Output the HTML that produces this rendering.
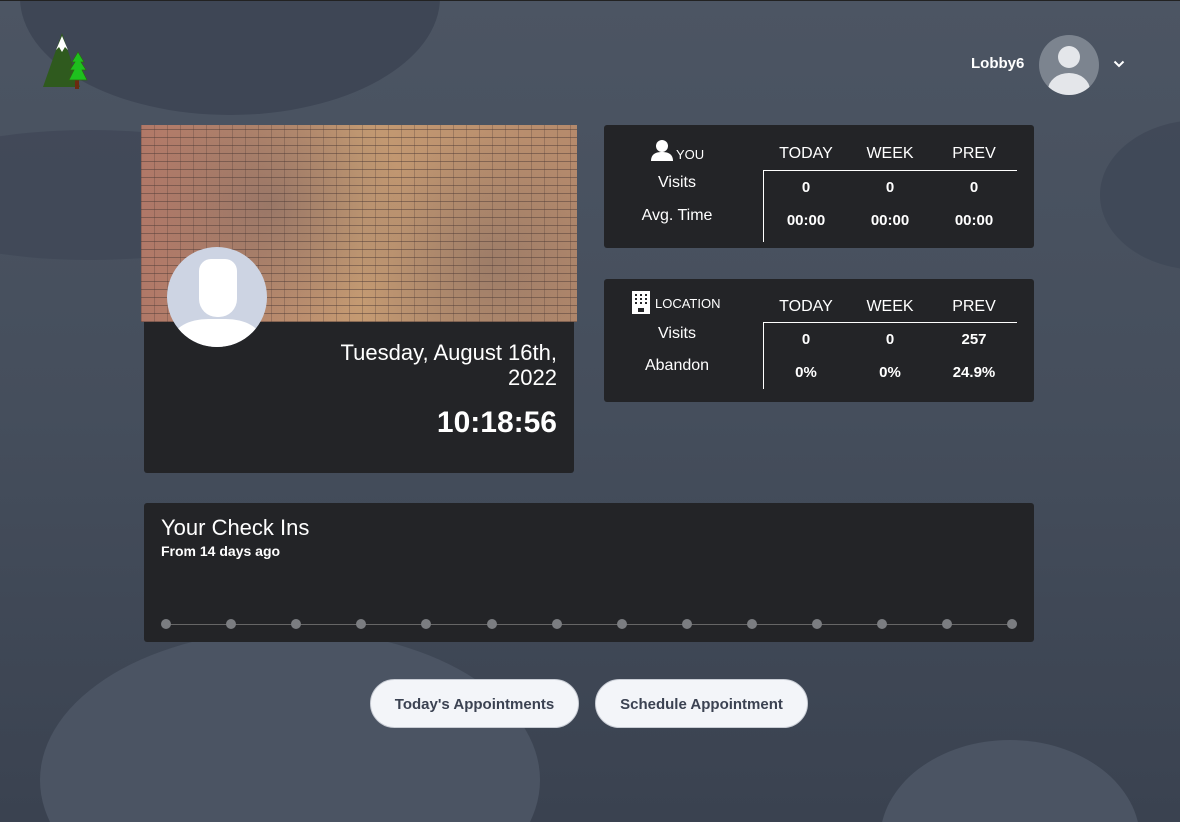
<!DOCTYPE html>
<html style="width:1180px;height:822px;overflow:hidden;background:#3a4250"><head><meta charset="utf-8"><style>
*{box-sizing:border-box;margin:0;padding:0}
body{width:1180px;height:822px;overflow:hidden;font-family:"Liberation Sans",sans-serif;color:#fff;position:relative;background:linear-gradient(180deg,#4c5563 0%,#454e5c 50%,#3a4250 100%);}
.bg{position:absolute;left:0;top:0;width:1180px;height:822px;overflow:hidden}
.blob{position:absolute;border-radius:50%;}
.card{position:absolute;background:#232427;border-radius:3px;}
.stat{width:430px;}
.stat .lbl{position:absolute;width:146px;text-align:center;font-size:16px;}
.stat .col{position:absolute;width:84px;text-align:center;font-size:16px;}
.stat .b{font-weight:bold;font-size:15px;}
.btn{position:absolute;top:679px;height:49px;background:#f3f5f9;border-radius:25px;color:#3b4252;font-size:15px;font-weight:bold;text-align:center;line-height:49px;border:1px solid #c8ccd4}
</style></head><body>
<div class="bg">
<div class="blob" style="left:20px;top:-120px;width:420px;height:235px;background:#3e4655"></div>
<div class="blob" style="left:-120px;top:130px;width:420px;height:130px;background:#3e4655;opacity:.7"></div>
<div class="blob" style="left:1100px;top:120px;width:200px;height:150px;background:#3f4756;opacity:.8"></div>
<div class="blob" style="left:40px;top:630px;width:500px;height:300px;background:#4b5463"></div>
<div class="blob" style="left:880px;top:740px;width:260px;height:200px;background:#4b5463"></div>
<div style="position:absolute;left:0;top:0;width:1180px;height:1px;background:#222"></div>
</div>

<svg style="position:absolute;left:40px;top:30px" width="52" height="62" viewBox="0 0 52 62">
<polygon points="3,57 22,3 40,57" fill="#2f5a1e"/>
<polygon points="16,20 22,6 28,20 25,17 22,22 19,17" fill="#fff"/>
<rect x="35" y="48" width="4" height="11" fill="#6b2a10"/>
<polygon points="38,22 44,32 41,32 46,40 42,40 47,50 29,50 34,40 30,40 35,32 32,32" fill="#1ec01e" stroke="#2a6a10" stroke-width=".7"/>
</svg>

<div style="position:absolute;left:971px;top:55px;font-size:15px;font-weight:bold">Lobby6</div>
<div style="position:absolute;left:1039px;top:35px;width:60px;height:60px;border-radius:50%;background:#7c848f;overflow:hidden">
<div style="position:absolute;left:19px;top:11px;width:22px;height:22px;border-radius:50%;background:#e4e6ea"></div>
<div style="position:absolute;left:9px;top:38px;width:42px;height:34px;border-radius:50%;background:#e4e6ea"></div></div>
<svg style="position:absolute;left:1113px;top:60px" width="12" height="8"><path d="M1.5 1.5l4.5 4.5 4.5-4.5" stroke="#fff" stroke-width="2" fill="none"/></svg>

<div class="card" style="left:144px;top:125px;width:430px;height:348px"></div>
<div style="position:absolute;left:141px;top:125px;width:436px;height:197px;background-color:#b9876a;background-image:
repeating-linear-gradient(0deg,rgba(80,60,55,.5) 0 1px,transparent 1px 8px),
repeating-linear-gradient(90deg,rgba(80,60,55,.3) 0 1px,transparent 1px 13px),
radial-gradient(circle at 30% 40%,rgba(90,80,90,.35),transparent 40%),
radial-gradient(circle at 80% 70%,rgba(90,80,90,.3),transparent 35%),
linear-gradient(90deg,#b07868,#c49a72,#b58a6c)"></div>
<div style="position:absolute;left:167px;top:247px;width:100px;height:100px;border-radius:50%;background:#cdd4e3;overflow:hidden">
<div style="position:absolute;left:32px;top:12px;width:38px;height:58px;border-radius:12px 12px 18px 18px;background:#fff"></div>
<div style="position:absolute;left:6px;top:72px;width:88px;height:50px;border-radius:40% 40% 0 0;background:#fff"></div></div>
<div style="position:absolute;right:623px;top:340px;text-align:right;font-size:22px;line-height:25px;font-weight:300">Tuesday, August 16th,<br>2022</div>
<div style="position:absolute;right:623px;top:406px;font-size:30px;font-weight:bold">10:18:56</div>

<div class="card stat" style="left:604px;top:125px;height:123px">
<svg style="position:absolute;left:46px;top:14px" width="24" height="22" viewBox="0 0 24 22"><circle cx="12" cy="7" r="6" fill="#fff"/><path d="M1 22c0-7 5-9 11-9s11 2 11 9z" fill="#fff"/></svg>
<div style="position:absolute;left:72px;top:22px;font-size:13px">YOU</div>
<div class="lbl" style="top:49px">Visits</div><div class="lbl" style="top:82px">Avg. Time</div>
<div class="col" style="left:160px;top:20px">TODAY</div><div class="col" style="left:244px;top:20px">WEEK</div><div class="col" style="left:328px;top:20px">PREV</div>
<div style="position:absolute;left:159px;top:45px;width:254px;height:1px;background:#fff"></div>
<div style="position:absolute;left:159px;top:45px;width:1px;height:72px;background:#fff"></div>
<div class="col b" style="left:160px;top:54px">0</div><div class="col b" style="left:244px;top:54px">0</div><div class="col b" style="left:328px;top:54px">0</div>
<div class="col b" style="left:160px;top:87px">00:00</div><div class="col b" style="left:244px;top:87px">00:00</div><div class="col b" style="left:328px;top:87px">00:00</div>
</div>

<div class="card stat" style="left:604px;top:279px;height:123px">
<svg style="position:absolute;left:28px;top:12px" width="18" height="23" viewBox="0 0 18 23"><rect width="18" height="23" fill="#fff"/><g fill="#232427"><rect x="3" y="3" width="2" height="2"/><rect x="8" y="3" width="2" height="2"/><rect x="13" y="3" width="2" height="2"/><rect x="3" y="7" width="2" height="2"/><rect x="8" y="7" width="2" height="2"/><rect x="13" y="7" width="2" height="2"/><rect x="3" y="11" width="2" height="2"/><rect x="8" y="11" width="2" height="2"/><rect x="13" y="11" width="2" height="2"/><rect x="6" y="17" width="6" height="4"/></g></svg>
<div style="position:absolute;left:51px;top:17px;font-size:13px">LOCATION</div>
<div class="lbl" style="top:46px">Visits</div><div class="lbl" style="top:78px">Abandon</div>
<div class="col" style="left:160px;top:19px">TODAY</div><div class="col" style="left:244px;top:19px">WEEK</div><div class="col" style="left:328px;top:19px">PREV</div>
<div style="position:absolute;left:159px;top:43px;width:254px;height:1px;background:#fff"></div>
<div style="position:absolute;left:159px;top:43px;width:1px;height:67px;background:#fff"></div>
<div class="col b" style="left:160px;top:52px">0</div><div class="col b" style="left:244px;top:52px">0</div><div class="col b" style="left:328px;top:52px">257</div>
<div class="col b" style="left:160px;top:85px">0%</div><div class="col b" style="left:244px;top:85px">0%</div><div class="col b" style="left:328px;top:85px">24.9%</div>
</div>

<div class="card" style="left:144px;top:503px;width:890px;height:139px">
<div style="position:absolute;left:17px;top:12px;font-size:22px;font-weight:300">Your Check Ins</div>
<div style="position:absolute;left:17px;top:40px;font-size:14px;font-weight:bold">From 14 days ago</div>
<div style="position:absolute;left:22px;top:121px;width:846px;height:1px;background:#666"></div>
</div>
<div id="dots"></div>
<script>
var h='';for(var i=0;i<14;i++){var x=166+i*65.1;h+='<div style="position:absolute;left:'+(x-5)+'px;top:619px;width:10px;height:10px;border-radius:50%;background:#7b7d81"></div>';}
document.getElementById('dots').innerHTML=h;
</script>

<div class="btn" style="left:370px;width:209px">Today's Appointments</div>
<div class="btn" style="left:595px;width:213px">Schedule Appointment</div>
</body></html>
